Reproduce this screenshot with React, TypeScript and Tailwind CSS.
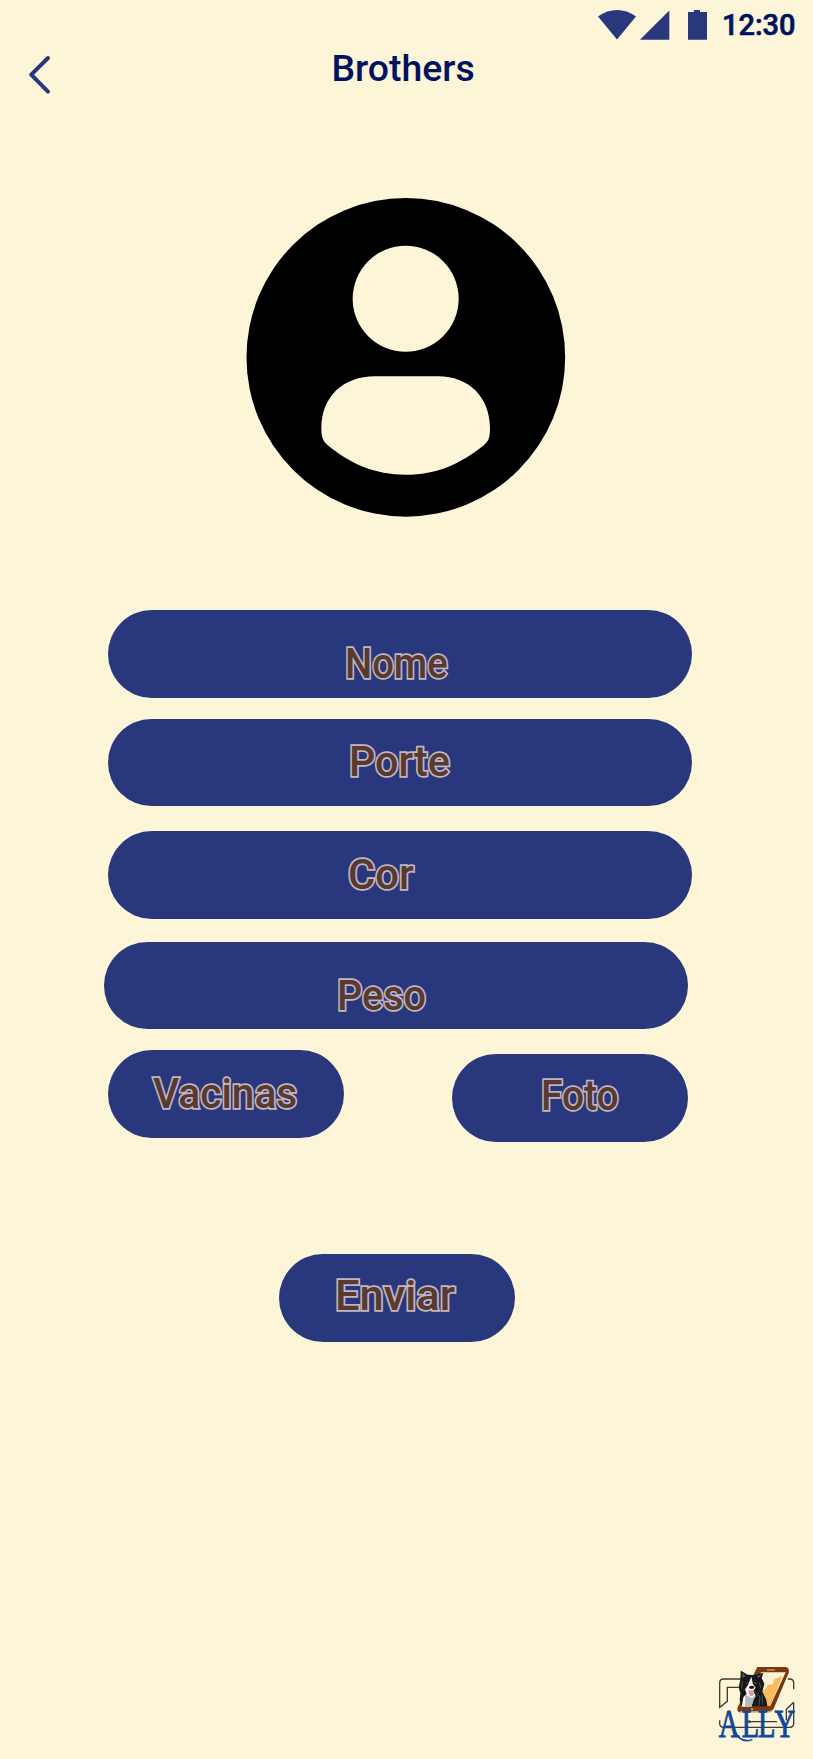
import React from "react";

type PillProps = {
  label: string;
  className: string;
  textClassName: string;
};

const labelStyle =
  "block w-max origin-left whitespace-nowrap font-['Roboto','Liberation_Sans',sans-serif] text-[43px] font-medium leading-[50px] text-[#583a30] [-webkit-text-stroke:3.5px_#c3b6c2] [paint-order:stroke_fill]";

function Pill({ label, className, textClassName }: PillProps) {
  return (
    <button type="button" className={`flex shrink-0 cursor-pointer items-start justify-start rounded-full bg-[#29387c] text-left ${className}`}>
      <span className={`${labelStyle} ${textClassName}`}>{label}</span>
    </button>
  );
}

function StatusBar() {
  return (
    <div className="flex h-[50px] items-start">
      <svg className="ml-[598px] mt-[10px] shrink-0" width="38" height="30" viewBox="0 0 38 30" fill="#29387c">
        <path d="M0 6.5Q19 -6.3 38 6.5L19 29.5Z" />
      </svg>
      <svg className="ml-1 mt-[10px] shrink-0" width="30" height="30" viewBox="0 0 30 30" fill="#29387c">
        <path d="M0 29.7L29.3 0.5V29.7Z" />
      </svg>
      <svg className="ml-[17px] mt-[10px] shrink-0" width="21" height="30" viewBox="0 0 21 30" fill="#29387c">
        <path d="M1 2H7V0H13V2H20V29.7H1Z" />
      </svg>
      <span className="ml-[14px] mt-2 font-['Roboto',sans-serif] text-[29px] font-medium leading-[34px] text-[#00115f] [-webkit-text-stroke:0.6px_#00115f]">12:30</span>
    </div>
  );
}

function Logo() {
  return (
    <svg width="110" height="109" viewBox="0 0 330 327" role="img" aria-label="Ally">
      <g fill="none" stroke="#423b34" strokeWidth="4">
        <path d="M116 87H62Q50 87 50 99V172L73 154V112H108" />
        <path d="M254 87H260Q272 87 272 99V118" />
        <path d="M272 157V220Q272 232 260 232H62Q50 232 50 220V211M272 157L250 178V211M138 215H222" />
      </g>
      <circle cx="139" cy="215" r="4" fill="#423b34" />
      <path d="M163 51H248Q260 53 257 68L212 176Q207 187 195 187H113Q101 187 104 172Z" fill="#783912" />
      <path d="M174 67H248L202 167H122Z" fill="#fdf3d4" />
      <path d="M238 77L202 167H151L177 122Q190 118 194 105L211 102Q209 88 221 85Z" fill="#faba5e" />
      <path d="M255 79L215 174Q209 185 195 185H111" fill="none" stroke="#fdf3d4" strokeWidth="2" />
      <path d="M193 60H214" stroke="#faba5e" strokeWidth="3" strokeLinecap="round" />
      <circle cx="147" cy="178" r="3" fill="#faba5e" />
      <path d="M115 63Q112 60 113 72L112 89L108 107Q107 120 112 128L110 151L116 169H193L190 149L178 125L184 101L176 84L181 68L154 75L134 74Z" fill="#151819" />
      <path d="M118 68L128 78L118 84ZM176 73L167 84L162 79Z" fill="#65565b" />
      <path d="M145 80L150 103L158 113L151 122L158 139L151 149L145 170H116L121 142L131 132L126 118L135 105Z" fill="#f8f7f5" />
      <path d="M127 134L147 144L157 136L145 170H126Z" fill="#b8bbbd" />
      <ellipse cx="146" cy="112" rx="8" ry="5" fill="#171819" />
      <path d="M136 122Q145 119 154 123L151 136Q145 142 139 135Z" fill="#e891a5" />
      <circle cx="133" cy="98" r="3" fill="#6d3e28" />
      <circle cx="157" cy="99" r="3" fill="#6d3e28" />
      <path d="M158 127L171 142L168 167M177 135L179 164M118 93L116 116M169 98L174 115" fill="none" stroke="#4b5052" strokeWidth="3" />
      <text
        transform="scale(.72 1)"
        x="66 161 229 298"
        y="262"
        fontSize="119"
        fontFamily="Liberation Serif, serif"
        fill="#0f489a"
        stroke="#0f489a"
        strokeWidth="3"
      >
        ALLY
      </text>
      <path d="M91 235Q105 272 132 272Q142 272 148 268" fill="none" stroke="#0f489a" strokeWidth="5" />
    </svg>
  );
}

export default function App() {
  return (
    <main className="flex h-[1759px] w-[813px] flex-col overflow-hidden bg-[#fcf5d7]">
      <StatusBar />
      <header className="flex h-[60px] items-start">
        <button type="button" aria-label="Voltar" className="ml-7 mt-[5px] block shrink-0 cursor-pointer">
          <svg width="24" height="40" viewBox="0 0 24 40" fill="none" stroke="#29387c" strokeWidth="4" strokeLinecap="round" strokeLinejoin="round">
            <path d="M20 3L3.2 19.7L20 36.7" />
          </svg>
        </button>
        <h1 className="ml-[279.5px] -mt-[4px] font-['Roboto',sans-serif] text-[37.4px] font-medium leading-[44px] text-[#00115f]">Brothers</h1>
      </header>

      <svg className="ml-[246px] mt-[88px] shrink-0" width="320" height="320" viewBox="48 54 960 960" aria-label="Perfil">
        <circle cx="527.5" cy="532" r="478" fill="#000" />
        <circle cx="527" cy="356" r="159" fill="#fcf5d7" />
        <path fill="#fcf5d7" d="M435 589H625C715 589 780 650 780 745C780 775 775 785 760 797C690 852 620 884 527 884C435 884 360 850 295 797C278 785 274 770 274 745C274 650 340 589 435 589Z" />
      </svg>

      <form className="mt-[92.4px] flex flex-col" onSubmit={(e) => e.preventDefault()}>
        <Pill label="Nome" className="ml-[108.4px] h-[87.6px] w-[583.6px]" textClassName="ml-[236.5px] mt-[28px] scale-x-[0.89]" />
        <Pill label="Porte" className="ml-[108.4px] mt-[21px] h-[87.5px] w-[583.6px]" textClassName="ml-[241px] mt-[17px] scale-x-[0.96]" />
        <Pill label="Cor" className="ml-[108.4px] mt-[25px] h-[87.5px] w-[583.6px]" textClassName="ml-[240px] mt-[18px] scale-x-[0.97]" />
        <Pill label="Peso" className="ml-[104.3px] mt-[23px] h-[87.5px] w-[583.6px]" textClassName="ml-[232.5px] mt-[28px] scale-x-[0.92]" />
        <div className="mt-[20.5px] flex h-[92px] items-start">
          <Pill label="Vacinas" className="ml-[108.4px] h-[87.6px] w-[235.5px]" textClassName="ml-[45px] mt-[18px] scale-x-[0.945]" />
          <Pill label="Foto" className="ml-[108.6px] mt-1 h-[87.6px] w-[235.5px]" textClassName="ml-[88.5px] mt-[16px] scale-x-[0.905]" />
        </div>
        <Pill label="Enviar" className="ml-[279.2px] mt-[112px] h-[87.6px] w-[235.5px]" textClassName="ml-[56px] mt-[16px] scale-x-[1.01]" />
      </form>
      <footer className="mt-auto self-end">
        <Logo />
      </footer>
    </main>
  );
}
